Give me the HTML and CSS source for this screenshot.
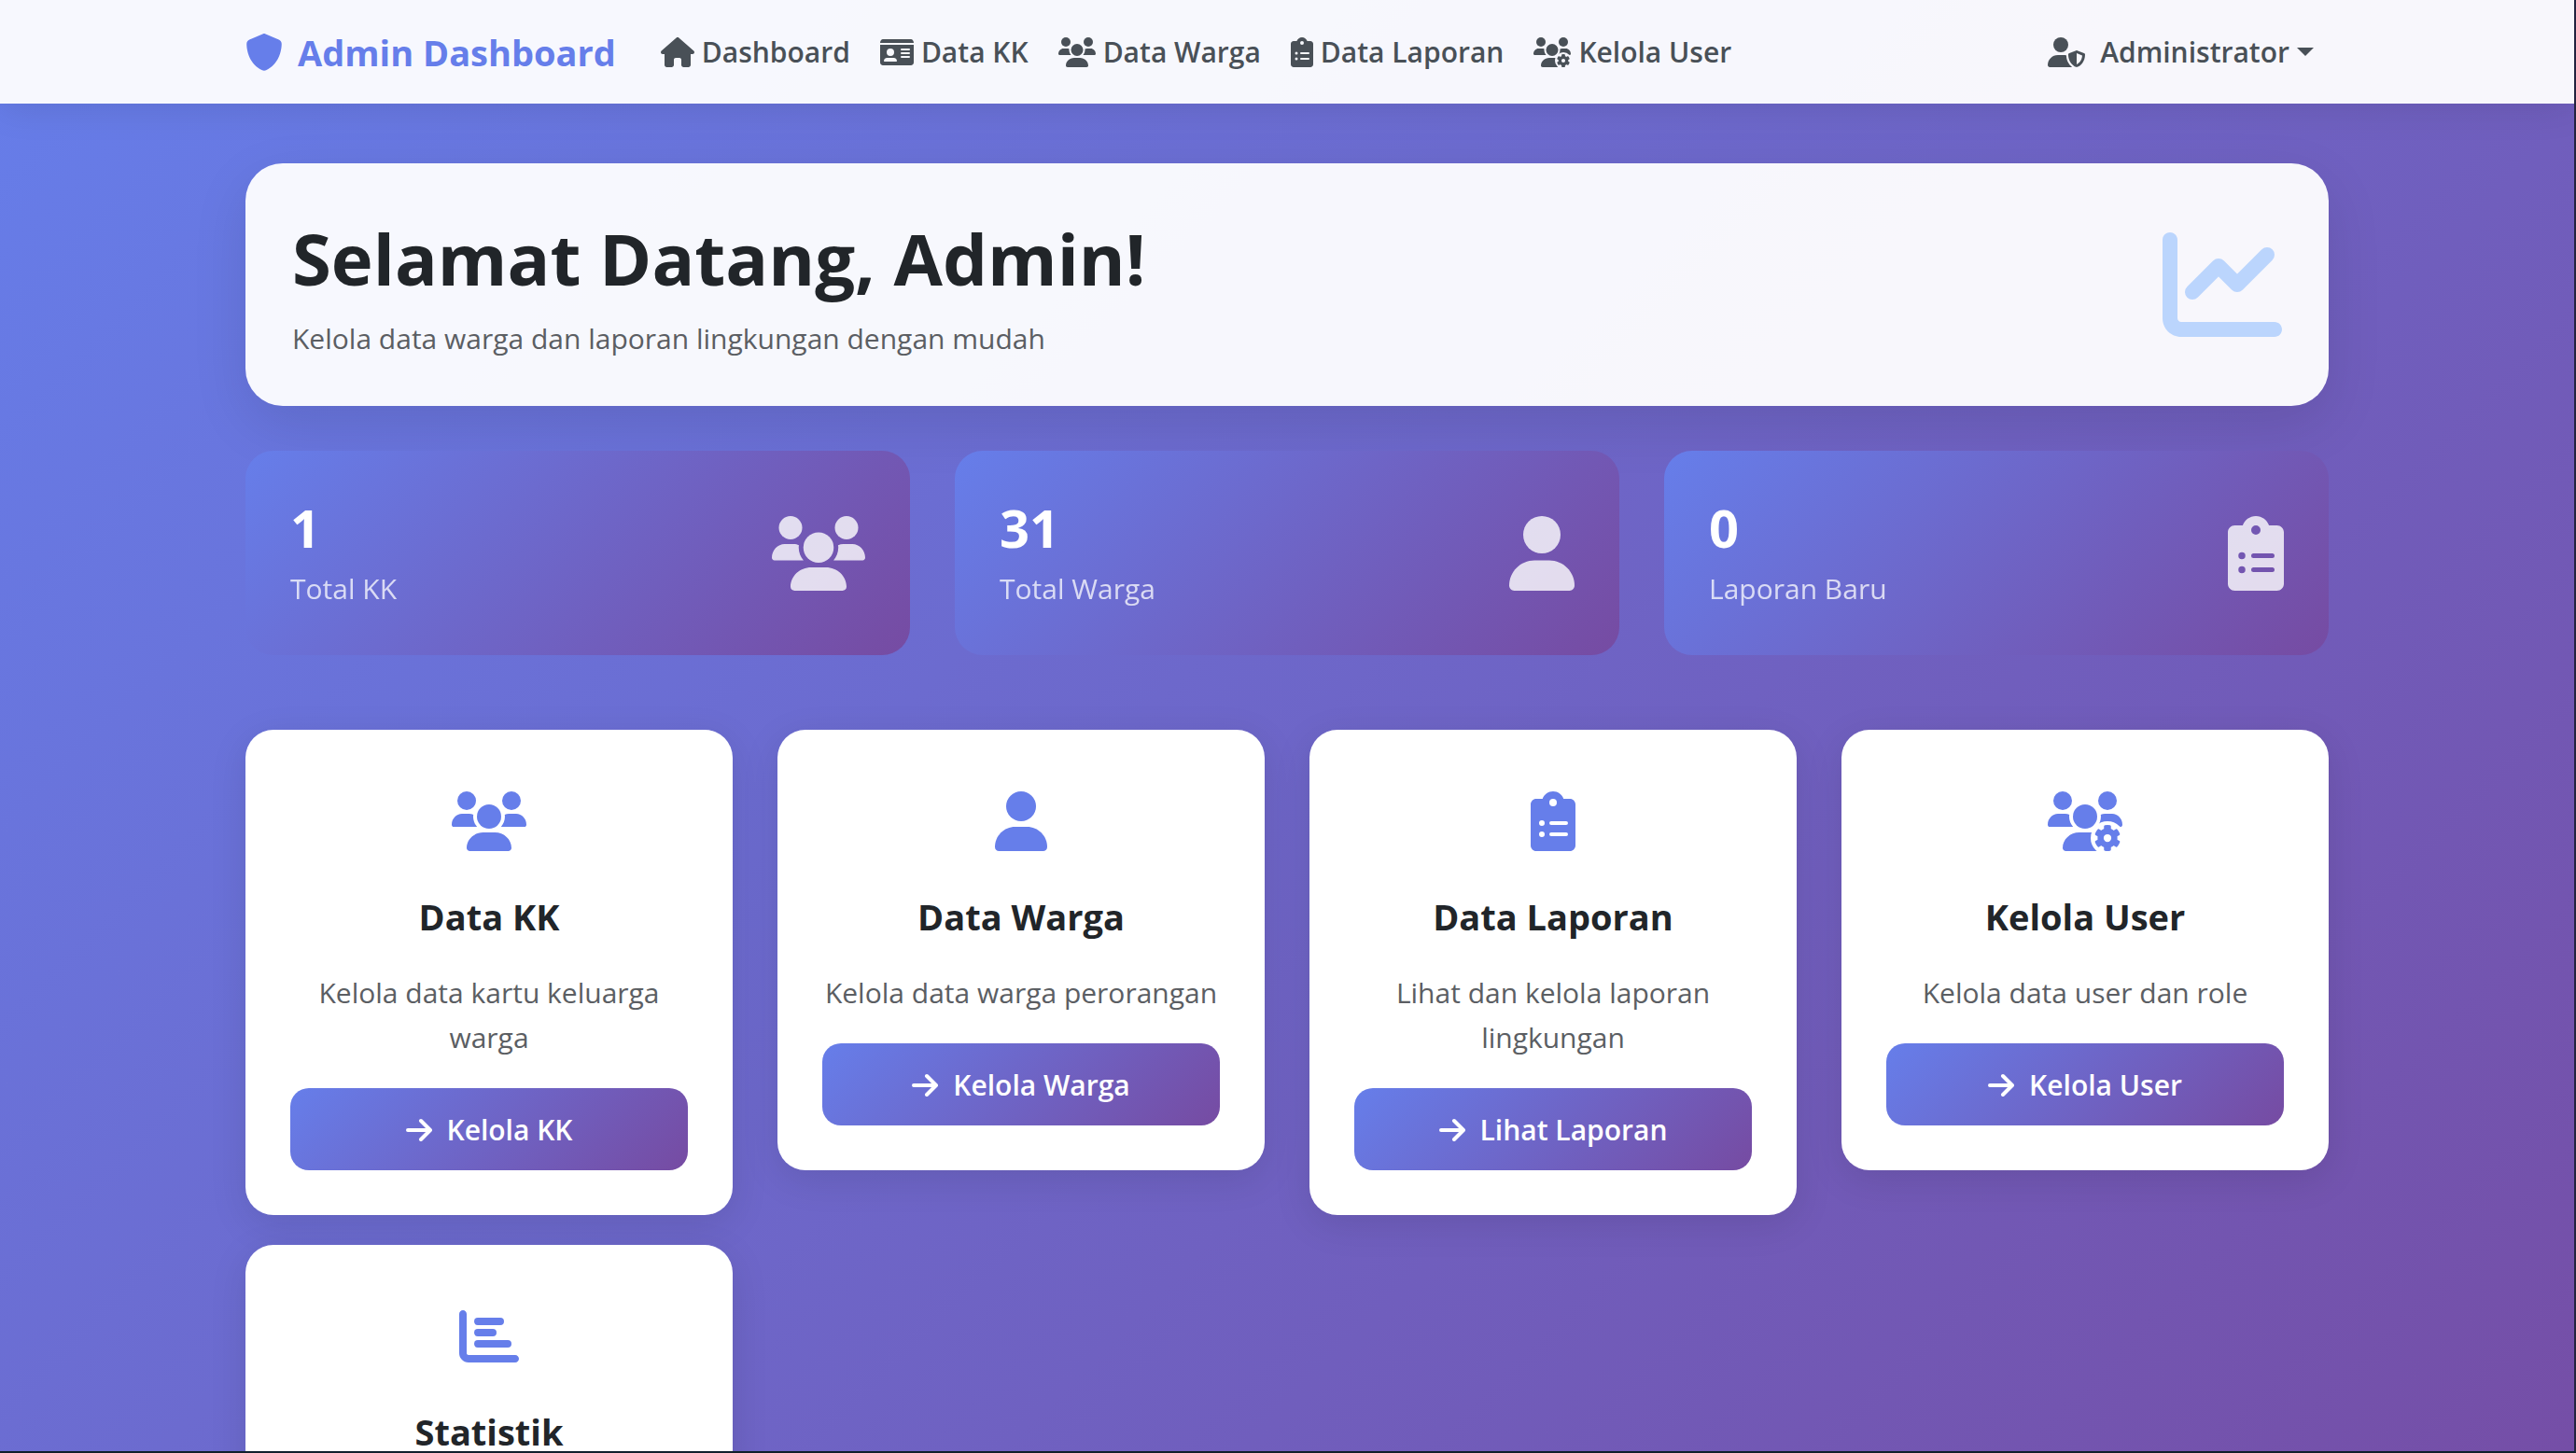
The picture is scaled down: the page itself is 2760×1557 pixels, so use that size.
FILE: index.html
```html
<!DOCTYPE html>
<html lang="id">
<head>
<meta charset="utf-8">
<meta name="viewport" content="width=device-width, initial-scale=1">
<title>Admin Dashboard</title>
<link rel="stylesheet" href="styles.css">
</head>
<body>
<svg class="sprite" aria-hidden="true">
  <symbol id="shield" viewBox="0 0 512 512"><path d="M256 0C260.600 0 265.200 1 269.400 2.900L457.700 82.800C479.700 92.100 496.100 113.800 496 140C495.500 239.200 454.700 420.700 282.400 503.200C265.700 511.200 246.300 511.200 229.600 503.200C57.300 420.700 16.500 239.200 16 140C15.900 113.800 32.300 92.100 54.300 82.800L242.700 2.900C246.800 1 251.400 0 256 0z"/></symbol>
  <symbol id="home" viewBox="0 0 576 512"><path d="M575.8 255.500c0 18-15 32.100-32 32.100h-32l.7 160.200c0 2.700-.2 5.400-.5 8.100V472c0 22.100-17.900 40-40 40H392c-22.100 0-40-17.900-40-40V384c0-17.700-14.300-32-32-32H256c-17.700 0-32 14.300-32 32v88c0 22.100-17.900 40-40 40H104c-22.100 0-40-17.900-40-40V287.600H32c-18 0-32-14-32-32.100c0-9 3-17 10-24L266.400 8c7-7 15-8 22-8s15 2 21 7L564.800 231.500c8 7 12 15 11 24z"/></symbol>
  <symbol id="id-card" viewBox="0 0 576 512"><path fill-rule="evenodd" d="M0 96h576c0-35.300-21.500-64-48-64H48C21.500 32 0 60.700 0 96zM0 128V432c0 26.500 21.500 48 48 48H528c26.500 0 48-21.500 48-48V128zM64 405.300c0-29.500 23.900-53.300 53.300-53.300H234.700c29.500 0 53.300 23.900 53.300 53.300c0 5.900-4.800 10.700-10.700 10.700H74.700c-5.900 0-10.700-4.800-10.700-10.700zM176 192a64 64 0 1 1 0 128 64 64 0 1 1 0-128zM368 192H496a16 16 0 0 1 0 32H368a16 16 0 0 1 0-32zM368 256H496a16 16 0 0 1 0 32H368a16 16 0 0 1 0-32zM368 320H496a16 16 0 0 1 0 32H368a16 16 0 0 1 0-32z"/></symbol>
  <symbol id="users" viewBox="0 0 640 512"><circle cx="128" cy="80" r="80"/><circle cx="512" cy="80" r="80"/><circle cx="320" cy="216" r="104"/><path d="M369.900 352H270.100C191.600 352 128 411.700 128 485.300C128 500.100 140.700 512 156.400 512h327.200C499.300 512 512 500.100 512 485.300C512 411.700 448.400 352 369.900 352zM183.900 216c0-5.400 1-10.600 1.600-15.900C174.600 194.100 162.600 192 149.900 192H88.100C39.400 192 0 233.800 0 285.300C0 295.600 7.900 304 17.600 304h199.500C196.700 280.200 183.900 249.700 183.900 216zM551.900 192h-61.800c-12.800 0-24.900 3-35.900 8.200C454.800 205.500 455.800 210.600 455.800 216c0 33.700-12.800 64.200-33.200 88h199.700C632.100 304 640 295.600 640 285.300C640 233.800 600.600 192 551.900 192z"/></symbol>
  <mask id="gear-cut" maskUnits="userSpaceOnUse" x="0" y="0" width="640" height="512"><rect width="640" height="512" fill="#fff"/><circle cx="512" cy="400" r="144" fill="#000"/></mask>
  <symbol id="users-gear" viewBox="0 0 640 512"><g mask="url(#gear-cut)"><circle cx="128" cy="80" r="80"/><circle cx="512" cy="80" r="80"/><circle cx="320" cy="216" r="104"/><path d="M369.900 352H270.100C191.600 352 128 411.700 128 485.300C128 500.100 140.700 512 156.400 512h327.200C499.300 512 512 500.100 512 485.300C512 411.700 448.400 352 369.900 352zM183.900 216c0-5.400 1-10.600 1.600-15.900C174.600 194.100 162.600 192 149.900 192H88.100C39.400 192 0 233.800 0 285.300C0 295.600 7.900 304 17.600 304h199.500C196.700 280.200 183.900 249.700 183.900 216zM551.900 192h-61.800c-12.800 0-24.900 3-35.900 8.200C454.800 205.500 455.800 210.600 455.800 216c0 33.700-12.800 64.200-33.200 88h199.700C632.100 304 640 295.600 640 285.300C640 233.800 600.600 192 551.900 192z"/></g><circle cx="512" cy="400" r="59" fill="none" stroke="currentColor" stroke-width="52"/><path d="M482 326v-26q0-8 8-10q22-4 44 0q8 2 8 10v26zM482 474v26q0 8 8 10q22 4 44 0q8-2 8-10v-26z"/><path transform="rotate(60 512 400)" d="M482 326v-26q0-8 8-10q22-4 44 0q8 2 8 10v26zM482 474v26q0 8 8 10q22 4 44 0q8-2 8-10v-26z"/><path transform="rotate(120 512 400)" d="M482 326v-26q0-8 8-10q22-4 44 0q8 2 8 10v26zM482 474v26q0 8 8 10q22 4 44 0q8-2 8-10v-26z"/></symbol>
  <symbol id="user" viewBox="0 0 448 512"><circle cx="224" cy="128" r="128"/><path d="M274.700 304H173.300C77.600 304 0 381.600 0 477.300C0 496.500 15.500 512 34.700 512h378.700C432.500 512 448 496.500 448 477.300C448 381.600 370.400 304 274.700 304z"/></symbol>
  <symbol id="clipboard" viewBox="0 0 384 512"><path fill-rule="evenodd" d="M336 64h-53.900C268.900 26.800 233.700 0 192 0S115.100 26.800 101.900 64H48C21.500 64 0 85.500 0 112v352C0 490.500 21.500 512 48 512h288c26.500 0 48-21.500 48-48v-352C384 85.500 362.500 64 336 64zM192 64a32 32 0 1 1 0 64a32 32 0 1 1 0-64zM96 248a24 24 0 1 1 0 48a24 24 0 1 1 0-48zM96 344a24 24 0 1 1 0 48a24 24 0 1 1 0-48zM176 256H304a16 16 0 0 1 0 32H176a16 16 0 0 1 0-32zM176 352H304a16 16 0 0 1 0 32H176a16 16 0 0 1 0-32z"/></symbol>
  <symbol id="user-shield" viewBox="0 0 640 512"><circle cx="224" cy="128" r="128"/><path d="M320.600 310.300C305.900 306.300 290.600 304 274.700 304H173.300C77.600 304 0 381.600 0 477.300C0 496.500 15.500 512 34.700 512H413.300c1.600 0 3-.8 4.600-1C364.600 468.700 320 395.200 320 319.900z"/><path fill-rule="evenodd" d="M622.300 271.100l-115.100-45c-4.100-1.600-12.600-3.800-22.300 0L369.800 271.100C359 275.200 352 285.100 352 295.100c0 111.600 68.800 188.800 132.900 213.900c9.600 3.800 18 1.600 22.300 0C558.400 489.900 640 420.500 640 295.100C640 285.100 633 275.200 622.300 271.100zM496 462.400V273.200l95.500 37.400C585.900 397.800 530.600 446 496 462.400z"/></symbol>
  <symbol id="chart-line" viewBox="0 0 512 512"><path d="M64 64c0-17.700-14.300-32-32-32S0 46.300 0 64V400c0 44.200 35.800 80 80 80H480c17.700 0 32-14.300 32-32s-14.300-32-32-32H80c-8.800 0-16-7.200-16-16z"/><path d="M128 288L240 176L320 256L448 128" fill="none" stroke="currentColor" stroke-width="64" stroke-linecap="round" stroke-linejoin="round"/></symbol>
  <symbol id="chart-bar" viewBox="0 0 512 512"><path d="M64 64c0-17.700-14.300-32-32-32S0 46.300 0 64V400c0 44.200 35.800 80 80 80H480c17.700 0 32-14.300 32-32s-14.300-32-32-32H80c-8.800 0-16-7.200-16-16z"/><path d="M160 128H352M160 224H288M160 320H416" fill="none" stroke="currentColor" stroke-width="64" stroke-linecap="round"/></symbol>
  <symbol id="arrow" viewBox="0 0 448 512"><path d="M32 256H400M256 96L416 256L256 416" fill="none" stroke="currentColor" stroke-width="64" stroke-linecap="round" stroke-linejoin="round"/></symbol>
</svg>
<div class="window">
  <div class="page">
    <header class="navbar">
      <div class="container navbar-inner">
        <a class="brand" href="#"><svg class="brand-icon"><use href="#shield"/></svg>Admin Dashboard</a>
        <nav class="nav">
          <a href="#"><svg class="w36"><use href="#home"/></svg>Dashboard</a>
          <a href="#"><svg class="w36"><use href="#id-card"/></svg>Data KK</a>
          <a href="#"><svg class="w40"><use href="#users"/></svg>Data Warga</a>
          <a href="#"><svg class="w24"><use href="#clipboard"/></svg>Data Laporan</a>
          <a href="#"><svg class="w40"><use href="#users-gear"/></svg>Kelola User</a>
        </nav>
        <button class="account" type="button"><svg class="w40"><use href="#user-shield"/></svg>Administrator<span class="caret"></span></button>
      </div>
    </header>
    <main class="container main">
      <section class="welcome">
        <div>
          <h1>Selamat Datang, Admin!</h1>
          <p>Kelola data warga dan laporan lingkungan dengan mudah</p>
        </div>
        <svg class="welcome-icon"><use href="#chart-line"/></svg>
      </section>
      <section class="stats">
        <div class="stat"><div><strong>1</strong><span>Total KK</span></div><svg class="w100"><use href="#users"/></svg></div>
        <div class="stat"><div><strong>31</strong><span>Total Warga</span></div><svg class="w70"><use href="#user"/></svg></div>
        <div class="stat"><div><strong>0</strong><span>Laporan Baru</span></div><svg class="w60"><use href="#clipboard"/></svg></div>
      </section>
      <section class="cards">
        <article class="card"><svg class="card-icon"><use href="#users"/></svg><h2>Data KK</h2><p>Kelola data kartu keluarga warga</p><a class="btn" href="#"><svg><use href="#arrow"/></svg>Kelola KK</a></article>
        <article class="card"><svg class="card-icon"><use href="#user"/></svg><h2>Data Warga</h2><p>Kelola data warga perorangan</p><a class="btn" href="#"><svg><use href="#arrow"/></svg>Kelola Warga</a></article>
        <article class="card"><svg class="card-icon"><use href="#clipboard"/></svg><h2>Data Laporan</h2><p>Lihat dan kelola laporan lingkungan</p><a class="btn" href="#"><svg><use href="#arrow"/></svg>Lihat Laporan</a></article>
        <article class="card"><svg class="card-icon"><use href="#users-gear"/></svg><h2>Kelola User</h2><p>Kelola data user dan role</p><a class="btn" href="#"><svg><use href="#arrow"/></svg>Kelola User</a></article>
        <article class="card card-tall"><svg class="card-icon"><use href="#chart-bar"/></svg><h2>Statistik</h2></article>
      </section>
    </main>
  </div>
</div>
</body>
</html>
```
FILE: styles.css
```css
* { box-sizing: border-box; }
body {
  margin: 0;
  font-family: "Segoe UI", "Open Sans", "Noto Sans", sans-serif;
  font-size: 30px;
  line-height: 48px;
  color: #212529;
}
h1, h2, p { margin: 0; }
a { text-decoration: none; }
svg { fill: currentColor; flex: none; height: 32px; }
.sprite { position: absolute; width: 0; height: 0; }
.window {
  height: 100vh;
  overflow: hidden;
  border-right: 2px solid #23233f;
  border-bottom: 2px solid #10202c;
}
.page { background: linear-gradient(135deg, #667eea 0%, #764ba2 100%); }
.container { width: 100%; max-width: 2280px; margin: 0 auto; padding: 0 24px; }

.navbar { background: rgba(255, 255, 255, .95); box-shadow: 0 4px 40px rgba(0, 0, 0, .1); }
.navbar-inner { display: flex; align-items: center; height: 111px; }
.brand { display: flex; align-items: center; gap: 16px; margin-right: 48px; font-size: 38px; font-weight: 700; color: #667eea; }
.brand-icon { width: 40px; height: 40px; }
.nav { display: flex; gap: 32px; margin-right: auto; }
.nav a, .account { display: flex; align-items: center; gap: 8px; color: #495057; font-weight: 600; }
.account { border: 0; background: none; padding: 0 16px; gap: 16px; font-family: inherit; font-size: inherit; line-height: inherit; }
.caret { border: 9px solid transparent; border-top-color: #495057; border-bottom: 0; margin-left: -8px; }
.w24 { width: 24px; }
.w36 { width: 36px; }
.w40 { width: 40px; }

.main { padding-top: 64px; padding-bottom: 48px; }
.welcome {
  display: flex;
  align-items: center;
  justify-content: space-between;
  padding: 50px;
  min-height: 260px;
  border-radius: 40px;
  background: rgba(255, 255, 255, .95);
  box-shadow: 0 20px 60px rgba(0, 0, 0, .1);
}
.welcome h1 { font-size: 76px; line-height: 100px; font-weight: 700; margin-bottom: 12px; padding-top: 4px; }
.welcome p { color: #5b5e63; }
.welcome > div { margin: -2px 0; }
.welcome-icon { width: 128px; height: 128px; color: #bbd5fd; }

.stats { display: grid; grid-template-columns: repeat(3, 1fr); gap: 48px; margin-top: 48px; }
.stat {
  display: flex;
  align-items: center;
  justify-content: space-between;
  min-height: 219px;
  padding: 40px 48px;
  border-radius: 30px;
  color: #fff;
  background: linear-gradient(135deg, #667eea 0%, #764ba2 100%);
}
.stat strong { display: block; font-size: 56px; line-height: 68px; margin-bottom: 8px; }
.stat span { opacity: .75; }
.stat svg { height: 80px; opacity: .8; }
.w100 { width: 100px; }
.w70 { width: 70px; }
.w60 { width: 60px; }

.cards { display: grid; grid-template-columns: repeat(4, 1fr); gap: 32px 48px; align-items: start; margin-top: 80px; }
.card {
  display: flex;
  flex-direction: column;
  align-items: center;
  padding: 48px;
  border-radius: 30px;
  background: #fff;
  text-align: center;
  box-shadow: 0 10px 40px rgba(0, 0, 0, .1);
}
.card-tall { min-height: 472px; }
.card-icon { width: 80px; height: 64px; margin: 18px 0 46px; color: #667eea; }
.card h2 { font-size: 38px; line-height: 48px; font-weight: 700; margin-bottom: 34px; }
.card p { color: #5b5e63; margin-bottom: 30px; }
.btn {
  display: flex;
  align-items: center;
  justify-content: center;
  gap: 16px;
  width: 100%;
  height: 88px;
  padding-top: 2px;
  border-radius: 20px;
  color: #fff;
  font-weight: 600;
  background: linear-gradient(135deg, #667eea 0%, #764ba2 100%);
}
.btn svg { width: 28px; }
```
